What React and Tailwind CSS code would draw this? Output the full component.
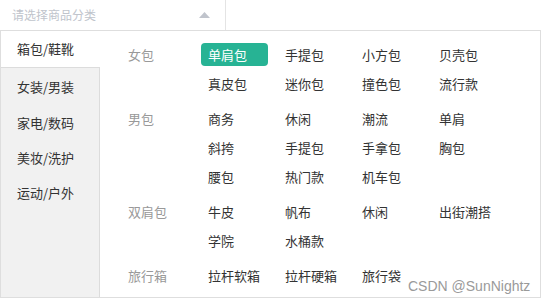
import { useState } from 'react';

const menus = ['箱包/鞋靴', '女装/男装', '家电/数码', '美妆/洗护', '运动/户外'];

const groups = [
  { name: '女包', rows: [['单肩包', '手提包', '小方包', '贝壳包'], ['真皮包', '迷你包', '撞色包', '流行款']] },
  { name: '男包', rows: [['商务', '休闲', '潮流', '单肩'], ['斜挎', '手提包', '手拿包', '胸包'], ['腰包', '热门款', '机车包']] },
  { name: '双肩包', rows: [['牛皮', '帆布', '休闲', '出街潮搭'], ['学院', '水桶款']] },
  { name: '旅行箱', rows: [['拉杆软箱', '拉杆硬箱', '旅行袋']] },
];

function App() {
  const [activeMenu, setActiveMenu] = useState(0);
  const [picked, setPicked] = useState('女包-单肩包');

  return (
    <div
      className="w-[545px] h-[302px] bg-white overflow-hidden relative text-[13px]"
      style={{ fontFamily: '"Noto Sans CJK SC", "Noto Sans", sans-serif' }}
    >
      {/* Select box */}
      <div className="w-[226px] h-[30px] flex items-center justify-between pl-3 pr-[15px] border-r border-[#e4e4e4] bg-white">
        <span className="text-[12px] text-[#c0c4cc]">请选择商品分类</span>
        <svg width="11" height="6" viewBox="0 0 11 6">
          <path d="M0 6 L5.5 0 L11 6 Z" fill="#c0c4cc" />
        </svg>
      </div>

      {/* Dropdown panel */}
      <div className="w-[541px] h-[268px] flex border border-[#dedede] bg-white">
        {/* Left menu */}
        <div className="w-[99px] flex flex-col">
          {menus.map((m, i) => (
            <div
              key={m}
              onClick={() => setActiveMenu(i)}
              className={`cursor-pointer pl-4 flex items-center text-[#333] ${
                i === activeMenu ? 'h-[36px] bg-white' : 'h-[35px] bg-[#f1f1f1] border-r border-[#dcdcdc]'
              } ${i === 1 ? 'border-t border-[#dcdcdc] h-[38px]' : ''}`}
            >
              {m}
            </div>
          ))}
          <div className="flex-1 bg-[#f1f1f1] border-r border-[#dcdcdc]" />
        </div>

        {/* Content */}
        <div className="flex-1 pt-3 pl-[28px] flex flex-col gap-3">
          {groups.map((g) => (
            <div key={g.name} className="flex">
              <div className="w-[73px] h-[23px] flex items-center text-[#999]">{g.name}</div>
              <div className="flex flex-col gap-[6px]">
                {g.rows.map((row, ri) => (
                  <div key={ri} className="flex gap-[10px]">
                    {row.map((item) => {
                      const key = `${g.name}-${item}`;
                      const on = picked === key;
                      return (
                        <div
                          key={item}
                          onClick={() => setPicked(key)}
                          className={`w-[67px] h-[23px] px-[7px] flex items-center rounded cursor-pointer whitespace-nowrap ${
                            on ? 'bg-[#27b394] text-white' : 'text-[#333]'
                          }`}
                        >
                          {item}
                        </div>
                      );
                    })}
                  </div>
                ))}
              </div>
            </div>
          ))}
        </div>
      </div>

      {/* Watermark */}
      <span
        className="absolute left-[408px] top-[276px] text-[14px] text-[#9a9a9a]"
        style={{ fontFamily: '"Liberation Sans", Arial, sans-serif' }}
      >
        CSDN @SunNightz
      </span>
    </div>
  );
}

export default App;
